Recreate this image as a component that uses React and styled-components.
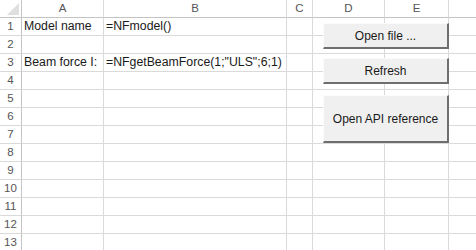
import React from "react";
import styled, { createGlobalStyle } from "styled-components";

const GlobalStyle = createGlobalStyle`
  html, body {
    margin: 0;
    padding: 0;
    background: #ffffff;
  }
  body {
    font-family: "Liberation Sans", Arial, sans-serif;
  }
`;

// the F column runs past the window edge, so its letter is not shown
const COLS = [
  { key: "A", width: 82, label: "A" },
  { key: "B", width: 183, label: "B" },
  { key: "C", width: 26, label: "C" },
  { key: "D", width: 72, label: "D" },
  { key: "E", width: 64, label: "E" },
  { key: "F", width: 72, label: "" },
];

const cells = {
  1: { A: "Model name", B: "=NFmodel()" },
  3: { A: "Beam force I:", B: '=NFgetBeamForce(1;"ULS";6;1)' },
};

const Sheet = styled.div`
  position: relative;
  width: 476px;
  height: 250px;
  overflow: hidden;
  background: #fff;
`;

const Row = styled.div`
  display: flex;
  height: 18px;
`;

const Cell = styled.div`
  box-sizing: border-box;
  flex: 0 0 ${(p) => p.$w}px;
  height: 100%;
  border-right: 1px solid #dadada;
  border-bottom: 1px solid #dadada;
  padding: 0 2px;
  font-size: 12.3px;
  line-height: 17px;
  color: #1a1a1a;
  white-space: nowrap;
  overflow: visible;
`;

const HeadCell = styled(Cell)`
  text-align: center;
  color: #555;
  font-size: 11.5px;
  border-bottom-color: #c4c4c4;
`;

const RowNum = styled(Cell)`
  text-align: center;
  color: #555;
  font-size: 11.5px;
  padding: 0;
  border-right-color: #c4c4c4;
`;

const Corner = styled(HeadCell)`
  position: relative;
  border-right-color: #c4c4c4;
  &::after {
    content: "";
    position: absolute;
    right: 2px;
    bottom: 2px;
    width: 0;
    height: 0;
    border-left: 12px solid transparent;
    border-bottom: 12px solid #dfdfdf;
  }
`;

const Button = styled.button`
  position: absolute;
  left: ${(p) => p.$x}px;
  top: ${(p) => p.$y}px;
  width: ${(p) => p.$w}px;
  height: ${(p) => p.$h}px;
  box-sizing: border-box;
  margin: 0;
  padding: 0;
  background: #f0f0f0;
  border-top: 1px solid #fbfbfb;
  border-left: 1px solid #fbfbfb;
  border-right: 2px solid #6e6e6e;
  border-bottom: 2px solid #6e6e6e;
  font-family: "Liberation Sans", Arial, sans-serif;
  font-size: 12px;
  color: #1a1a1a;
  text-align: center;
`;

export default function App() {
  const rows = Array.from({ length: 13 }, (_, i) => i + 1);
  return (
    <>
      <GlobalStyle />
      <Sheet>
        <Row>
          <Corner $w={22} />
          {COLS.map((c) => (
            <HeadCell key={c.key} $w={c.width}>
              {c.label}
            </HeadCell>
          ))}
        </Row>
        {rows.map((r) => (
          <Row key={r}>
            <RowNum $w={22}>{r}</RowNum>
            {COLS.map((c) => (
              <Cell key={c.key} $w={c.width}>
                {cells[r]?.[c.key] || ""}
              </Cell>
            ))}
          </Row>
        ))}
        <Button $x={323} $y={23} $w={126} $h={26}>
          Open file ...
        </Button>
        <Button $x={323} $y={58} $w={126} $h={26}>
          Refresh
        </Button>
        <Button $x={323} $y={95} $w={126} $h={48}>
          Open API reference
        </Button>
      </Sheet>
    </>
  );
}
